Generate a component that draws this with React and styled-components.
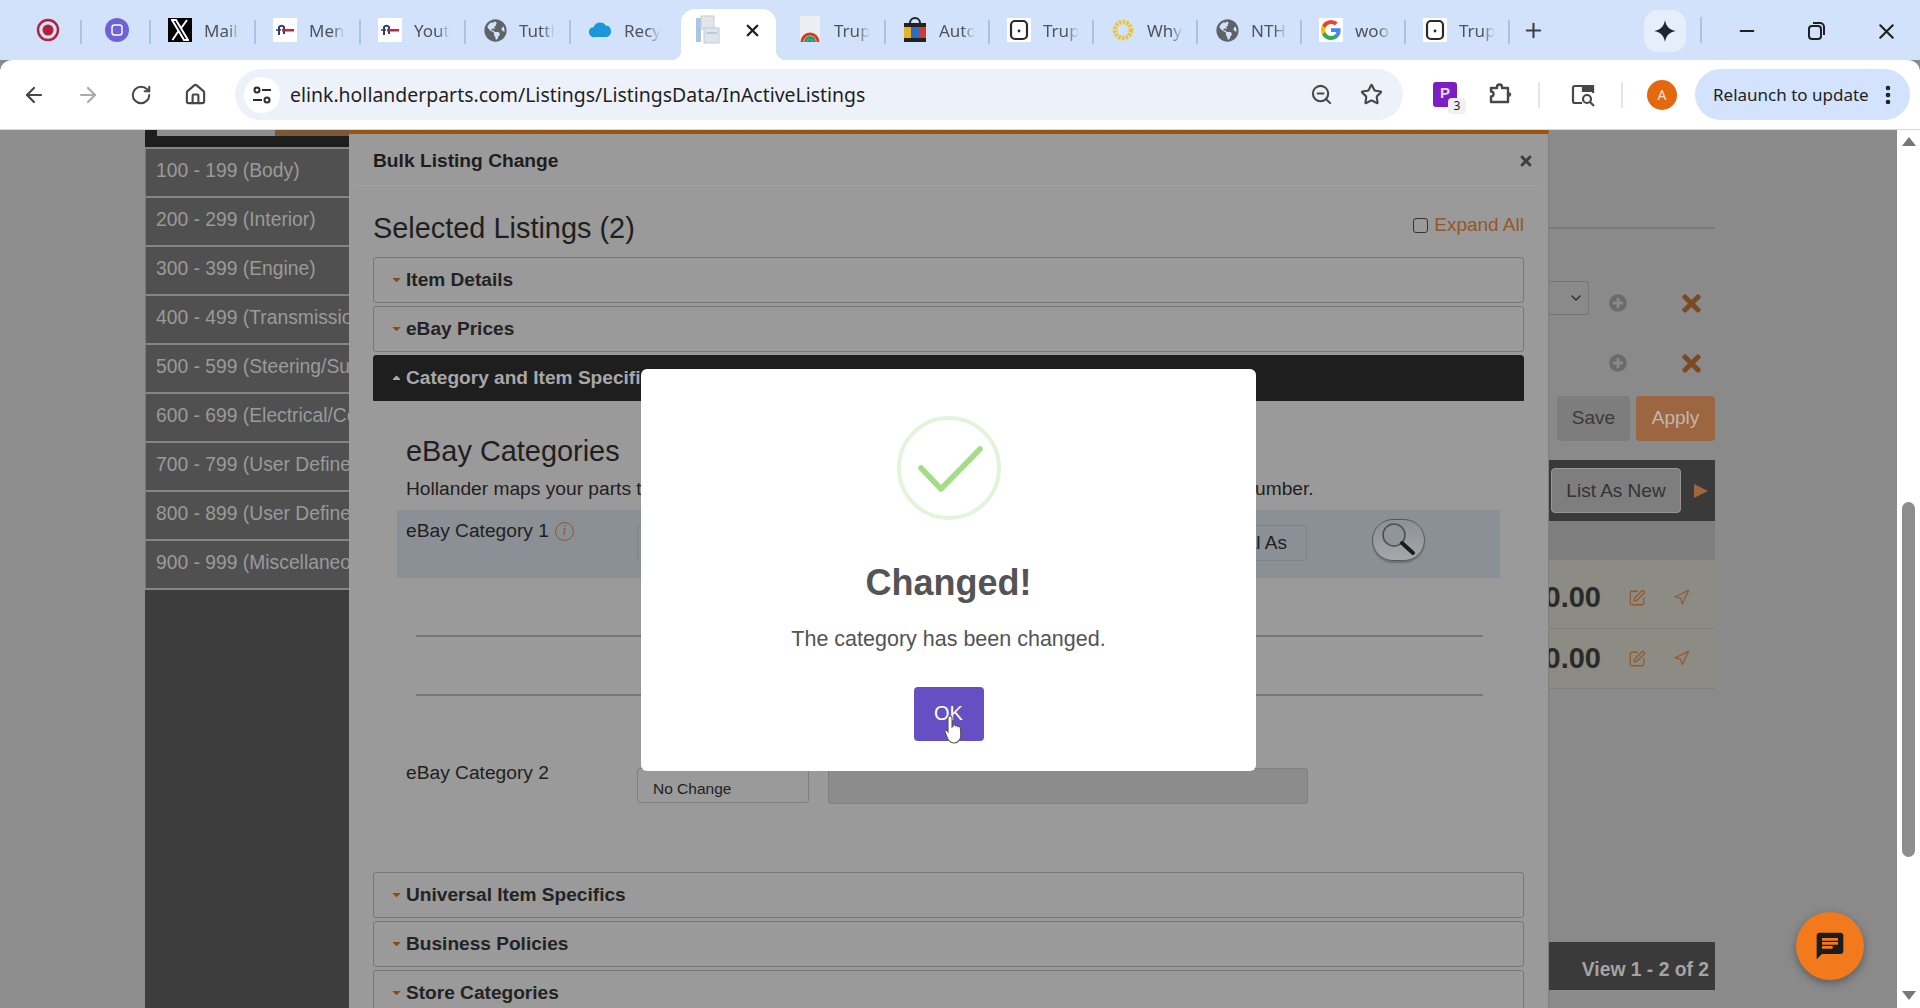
import React from 'react';
import styled, { createGlobalStyle } from 'styled-components';
import { ArrowLeft, ArrowRight, RotateCw, Home, ZoomOut, Star, Plus, Minus, X, EllipsisVertical, SquarePen, Navigation, ChevronDown } from 'lucide-react';
import { FaTimes, FaPlusCircle, FaCaretDown, FaCaretUp, FaGlobeAmericas } from 'react-icons/fa';

const GlobalStyle = createGlobalStyle`
  html, body { margin: 0; padding: 0; height: 100%; overflow: hidden; background: #8a8a8a; }
  * { box-sizing: border-box; }
  body { font-family: "Liberation Sans", Arial, sans-serif; }
`;

const Screen = styled.div`
  position: relative;
  width: 1920px;
  height: 1008px;
  overflow: hidden;
  display: flex;
  flex-direction: column;
`;

/* browser chrome */
const TabStrip = styled.div`
  height: 60px;
  background: #d3e2fb;
  display: flex;
  align-items: flex-end;
  padding-left: 13px;
  flex: none;
`;
const Tab = styled.div`
  width: ${p => p.$w}px;
  height: 51px;
  padding: 0 0 9px ${p => p.$pad}px;
  display: flex;
  align-items: center;
  gap: 12px;
  position: relative;
  &::after {
    content: '';
    display: ${p => (p.$nosep ? 'none' : 'block')};
    position: absolute;
    right: 0;
    top: 11px;
    height: 24px;
    width: 2px;
    background: #a9c3ec;
  }
`;
const ActiveTab = styled.div`
  width: 95px;
  height: 51px;
  background: #fff;
  border-radius: 14px 14px 0 0;
  padding: 0 14px 9px 14px;
  display: flex;
  align-items: center;
  justify-content: space-between;
  position: relative;
  &::before, &::after {
    content: '';
    position: absolute;
    bottom: 0;
    width: 10px;
    height: 10px;
    background: radial-gradient(circle at 0 0, transparent 10px, #fff 10.5px);
  }
  &::before { left: -10px; }
  &::after { right: -10px; background: radial-gradient(circle at 100% 0, transparent 10px, #fff 10.5px); }
`;
const TabTitle = styled.span`
  font-family: "Noto Sans", sans-serif;
  font-size: 17px;
  color: #50535a;
  width: 36px;
  overflow: hidden;
  white-space: nowrap;
  -webkit-mask-image: linear-gradient(90deg, #000 65%, transparent 100%);
  mask-image: linear-gradient(90deg, #000 65%, transparent 100%);
`;
const Favicon = styled.div`
  width: 24px;
  height: 24px;
  flex: none;
  display: flex;
  align-items: center;
  justify-content: center;
  background: ${p => p.$bg || 'transparent'};
  color: ${p => p.$color || '#5f6368'};
`;
const NewTab = styled.div`
  width: 50px;
  height: 51px;
  padding: 0 0 9px 12px;
  display: flex;
  align-items: center;
  color: #3c4043;
`;
const GeminiPill = styled.div`
  width: 42px;
  height: 42px;
  margin-left: 84px;
  margin-bottom: 8px;
  border-radius: 14px;
  background: #e6eefb;
  display: flex;
  align-items: center;
  justify-content: center;
  align-self: flex-end;
`;
const WinSep = styled.div`
  width: 2px;
  height: 26px;
  background: #a9c3ec;
  margin: 0 0 17px 14px;
`;
const WinButtons = styled.div`
  display: flex;
  align-items: center;
  height: 60px;
  margin-left: 34px;
  gap: 47px;
  color: #1f1f1f;
  padding-top: 2px;
  align-self: flex-start;
`;

const Toolbar = styled.div`
  height: 70px;
  background: #fff;
  border-radius: 12px 12px 0 0;
  border-bottom: 1px solid #d8d8d8;
  display: flex;
  align-items: center;
  padding-left: 22px;
  flex: none;
`;
const NavBtn = styled.div`
  width: 54px;
  flex: none;
  color: ${p => (p.$dim ? '#a8abb0' : '#474747')};
  display: flex;
  align-items: center;
`;
const Omnibox = styled.div`
  width: 1168px;
  height: 51px;
  margin-left: -3px;
  border-radius: 26px;
  background: #edf2fa;
  display: flex;
  align-items: center;
  padding: 0 20px 0 9px;
  flex: none;
`;
const SiteChip = styled.div`
  width: 36px;
  height: 36px;
  border-radius: 50%;
  background: #fff;
  display: flex;
  align-items: center;
  justify-content: center;
  flex: none;
`;
const Url = styled.div`
  margin-left: 10px;
  font-family: "Noto Sans", sans-serif;
  font-size: 19.45px;
  color: #1f1f1f;
  flex: 1;
  white-space: nowrap;
`;
const OmniIcons = styled.div`
  display: flex;
  gap: 27px;
  color: #474747;
  align-items: center;
`;
const ToolIcons = styled.div`
  display: flex;
  align-items: center;
  flex: none;
  margin-left: 30px;
  color: #474747;
`;
const ExtBadge = styled.div`
  position: relative;
  width: 24px;
  height: 25px;
  border-radius: 3px;
  background: #7b1fc4;
  color: #e8d5f7;
  font: bold 15px "Liberation Sans", sans-serif;
  text-align: center;
  line-height: 22px;
`;
const ExtCount = styled.span`
  position: absolute;
  right: -9px;
  bottom: -7px;
  width: 18px;
  height: 16px;
  background: #f1f1f1;
  border-radius: 4px;
  color: #1f1f1f;
  font: 12px/16px "Noto Sans", sans-serif;
`;
const PuzzleIcon = styled.svg`
  margin-left: 30px;
`;
const ToolSep = styled.div`
  width: 2px;
  height: 26px;
  background: #dfe6f1;
  margin: 0 ${p => p.$r}px 0 ${p => p.$l}px;
`;
const Avatar = styled.div`
  width: 30px;
  height: 30px;
  border-radius: 50%;
  background: #e3680f;
  color: #fde3cf;
  font: 14px/30px "Noto Sans", sans-serif;
  text-align: center;
`;
const RelaunchPill = styled.div`
  width: 215px;
  height: 51px;
  margin-left: 18px;
  border-radius: 26px;
  background: #d3e3fd;
  display: flex;
  align-items: center;
  justify-content: space-between;
  padding: 0 10px 0 18px;
  font-family: "Noto Sans", sans-serif;
  font-size: 17px;
  color: #1f1f1f;
  white-space: nowrap;
`;

/* dimmed page below */
const Page = styled.div`
  flex: 1;
  min-height: 0;
  display: flex;
  background: #8a8a8a;
  overflow: hidden;
`;
const Gutter = styled.div`
  width: 145px;
  flex: none;
  background: #8e8e8e;
`;
const Sidebar = styled.div`
  width: 204px;
  flex: none;
  background: #3d3d3d;
  display: flex;
  flex-direction: column;
`;
const SidebarTop = styled.div`
  height: 17px;
  background: #1e1e1e;
  display: flex;
  flex: none;
`;
const SidebarSearch = styled.div`
  margin-left: 12px;
  width: 118px;
  height: 6px;
  background: #8d8d8d;
`;
const SidebarBrown = styled.div`
  flex: 1;
  height: 6px;
  background: #7a5a36;
`;
const SideRow = styled.div`
  height: 49px;
  flex: none;
  background: #505050;
  border-top: 2px solid #858585;
  border-left: 1px solid #777;
  padding-left: 10px;
  color: #9a9a9a;
  font-size: 19.3px;
  line-height: 44px;
  white-space: nowrap;
  overflow: hidden;
  &:last-child { border-bottom: 2px solid #858585; height: 51px; }
`;

const Panel = styled.div`
  width: 1200px;
  flex: none;
  background: #9a9a9a;
  border-top: 4px solid #9b5413;
  border-right: 1px solid #808080;
  display: flex;
  flex-direction: column;
`;
const PanelHead = styled.div`
  height: 52px;
  margin: 0 9px 0 6px;
  padding: 2px 4px 0 18px;
  border-bottom: 1px solid #a4a4a4;
  display: flex;
  align-items: center;
  justify-content: space-between;
  flex: none;
`;
const PanelTitle = styled.div`
  font-weight: bold;
  font-size: 19.2px;
  color: #1d1d1d;
`;
const CloseX = styled.div`
  color: #3e3e3e;
  display: flex;
  margin-right: 1px;
`;
const PanelBody = styled.div`
  padding: 0 24px;
`;
const SelectedRow = styled.div`
  height: 71px;
  display: flex;
  align-items: center;
  justify-content: space-between;
`;
const SelectedTitle = styled.div`
  font-size: 28.9px;
  color: #1f1f1f;
  padding-top: 13px;
`;
const ExpandAll = styled.div`
  display: flex;
  align-items: center;
  gap: 6px;
  color: #96562a;
  font-size: 19px;
  padding-top: 7px;
`;
const CheckBox = styled.span`
  width: 15px;
  height: 15px;
  border: 1.5px solid #333;
  border-radius: 3px;
  background: #9a9a9a;
`;
const Accordion = styled.div`
  height: 46px;
  margin-bottom: 3px;
  border: 1px solid ${p => (p.$open ? '#1e1e1e' : '#777')};
  border-radius: ${p => (p.$open ? '3px 3px 0 0' : '3px')};
  background: ${p => (p.$open ? '#1e1e1e' : '#9a9a9a')};
  color: ${p => (p.$open ? '#a8a8a8' : '#232323')};
  font-weight: bold;
  font-size: 19.1px;
  display: flex;
  align-items: center;
  padding: 0 0 1px 16px;
  gap: 3px;
  svg { color: ${p => (p.$open ? '#a8a8a8' : '#8a4c14')}; }
`;
const CategoryBlock = styled.div`
  padding: 0 0 68px 33px;
`;
const H2 = styled.div`
  font-size: 28.9px;
  color: #1f1f1f;
  padding-top: 31px;
  height: 69px;
`;
const Intro = styled.div`
  font-size: 19.2px;
  color: #1f1f1f;
  white-space: nowrap;
  height: 37px;
  line-height: 24px;
  padding-top: 4px;
`;
const BlueRow = styled.div`
  margin-left: -9px;
  margin-right: 24px;
  height: 68px;
  background: #8a9095;
  display: flex;
  padding: 0 0 0 9px;
  color: #1f1f1f;
`;
const RowLabel = styled.div`
  width: 231px;
  flex: none;
  font-size: 19.2px;
  margin-top: ${p => p.$top}px;
  display: flex;
  gap: 6px;
  color: #1f1f1f;
`;
const InfoDot = styled.span`
  width: 19px;
  height: 19px;
  border: 1.5px solid #96562a;
  border-radius: 50%;
  color: #96562a;
  font: italic 14px/16px "Liberation Serif", serif;
  text-align: center;
  margin-top: 2px;
`;
const WideInput = styled.div`
  width: 670px;
  height: 36px;
  margin-top: 15px;
  border: 1px solid #7b858c;
  border-radius: 3px;
  padding-right: 19px;
  text-align: right;
  font-size: 19px;
  line-height: 34px;
  color: #202020;
  overflow: hidden;
  white-space: nowrap;
`;
const Lens = styled.div`
  width: 53px;
  height: 42px;
  margin: 9px 0 0 65px;
  border-radius: 21px;
  border: 1.5px solid #555a5e;
  background: linear-gradient(180deg, #8c9195, #a4a8ab);
  box-shadow: 0 2px 1px rgba(60, 60, 60, 0.35);
`;
const Divider = styled.div`
  height: 2px;
  background: #777;
  margin: ${p => p.$top}px 41px 0 10px;
`;
const SecondRow = styled.div`
  display: flex;
  margin-top: 72px;
  height: 36px;
`;
const SmallSelect = styled.div`
  width: 172px;
  height: 35px;
  border: 1px solid #7f7f7f;
  border-radius: 3px;
  font-size: 15.5px;
  padding: 11px 0 0 15px;
  color: #1f1f1f;
`;
const GreyInput = styled.div`
  width: 480px;
  height: 36px;
  margin-left: 19px;
  background: #8c8c8c;
  border: 1px solid #7f7f7f;
  border-radius: 3px;
`;

/* right hand page content */
const RightCol = styled.div`
  width: 166px;
  flex: none;
  display: flex;
  flex-direction: column;
`;
const RightRule = styled.div`
  height: 2px;
  background: #7a7a7a;
  margin-top: 97px;
`;
const FilterRow = styled.div`
  height: ${p => p.$h}px;
  margin-top: ${p => p.$top}px;
  display: flex;
  align-items: center;
`;
const SelectStub = styled.div`
  width: 40px;
  height: 34px;
  border: 1px solid #757575;
  border-left: 0;
  border-radius: 0 3px 3px 0;
  display: flex;
  align-items: center;
  justify-content: flex-end;
  padding-right: 4px;
  color: #333;
  flex: none;
`;
const PlusIcon = styled.div`
  color: #6b6b6b;
  display: flex;
  margin-left: ${p => p.$ml}px;
  margin-top: ${p => p.$mt}px;
  flex: none;
`;
const RemoveIcon = styled.div`
  color: #7a4a22;
  display: flex;
  margin-left: 51px;
  margin-top: ${p => p.$mt}px;
  flex: none;
`;
const ButtonRow = styled.div`
  display: flex;
  gap: 6px;
  padding-left: 8px;
  margin-top: 16px;
`;
const PageButton = styled.div`
  height: 45px;
  width: ${p => p.$w}px;
  border-radius: 4px;
  background: ${p => (p.$primary ? '#9c6640' : '#7d7d7d')};
  color: ${p => (p.$primary ? '#c4b7ac' : '#3a3a3a')};
  font-size: 19px;
  line-height: 43px;
  text-align: center;
`;
const DarkBar = styled.div`
  height: 61px;
  margin-top: 19px;
  background: #3a3a3a;
  display: flex;
  align-items: center;
  padding-left: 2px;
`;
const ListBtn = styled.div`
  width: 130px;
  height: 45px;
  background: #7e7e7e;
  border: 1px solid #959595;
  border-radius: 4px;
  color: #333;
  font-size: 19px;
  line-height: 43px;
  text-align: center;
`;
const PlayArrow = styled.div`
  width: 0;
  height: 0;
  margin-left: 13px;
  border-left: 14px solid #9c6640;
  border-top: 7px solid transparent;
  border-bottom: 7px solid transparent;
`;
const GreyBand = styled.div`
  height: 39px;
  background: #7e7e7e;
`;
const PriceRow = styled.div`
  height: ${p => p.$h}px;
  padding-top: ${p => p.$pt}px;
  background: #8c8b84;
  border-bottom: 1px solid #7f7f7f;
  display: flex;
  align-items: center;
  color: #2a2a2a;
  font-weight: bold;
  font-size: 29px;
  overflow: hidden;
`;
const PriceText = styled.div`
  width: 52px;
  flex: none;
  display: flex;
  justify-content: flex-end;
  white-space: nowrap;
  overflow: hidden;
`;
const RowIcon = styled.div`
  color: #96592c;
  display: flex;
  margin-left: ${p => p.$ml}px;
`;
const ViewBar = styled.div`
  height: 48px;
  margin-top: 253px;
  background: #3a3a3a;
  color: #a4a4a4;
  font-weight: bold;
  font-size: 19.3px;
  display: flex;
  align-items: flex-end;
  justify-content: flex-end;
  padding: 0 6px 9px 0;
  white-space: nowrap;
`;
const Spacer = styled.div`
  flex: 1;
`;
const Scrollbar = styled.div`
  width: 23px;
  flex: none;
  background: #fff;
  display: flex;
  flex-direction: column;
  align-items: center;
  padding-top: 7px;
`;
const ScrollUp = styled.div`
  width: 0;
  height: 0;
  border-left: 7px solid transparent;
  border-right: 7px solid transparent;
  border-bottom: 9px solid #777;
`;
const ScrollThumb = styled.div`
  width: 13px;
  height: 355px;
  margin-top: 356px;
  background: #8d8d8d;
  border-radius: 7px;
`;
const ScrollDown = styled.div`
  width: 0;
  height: 0;
  margin-top: 134px;
  border-left: 7px solid transparent;
  border-right: 7px solid transparent;
  border-top: 9px solid #777;
`;

const ChatFab = styled.div`
  position: absolute;
  left: 1796px;
  top: 912px;
  width: 68px;
  height: 68px;
  border-radius: 50%;
  background: #f37a1c;
  box-shadow: 0 3px 8px rgba(0, 0, 0, 0.35);
  display: flex;
  align-items: center;
  justify-content: center;
`;

/* success dialog */
const AlertOverlay = styled.div`
  position: absolute;
  left: 0;
  top: 131px;
  width: 1897px;
  height: 878px;
  display: flex;
  align-items: center;
  justify-content: center;
`;
const Alert = styled.div`
  width: 615px;
  height: 402px;
  background: #fff;
  border-radius: 6px;
  display: flex;
  flex-direction: column;
  align-items: center;
  padding-top: 47px;
`;
const AlertTitle = styled.div`
  margin-top: 42px;
  font-weight: bold;
  font-size: 36px;
  line-height: 42px;
  color: #545454;
`;
const AlertText = styled.div`
  margin-top: 22px;
  font-size: 21.5px;
  line-height: 26px;
  color: #545454;
`;
const OkButton = styled.div`
  position: relative;
  margin-top: 35px;
  width: 70px;
  height: 54px;
  border-radius: 4px;
  background: #6450c2;
  color: #fff;
  font-size: 20px;
  line-height: 52px;
  text-align: center;
`;
const Hand = styled.svg`
  position: absolute;
  left: 30px;
  top: 27px;
`;

const XLogo = () => (
  <svg width="18" height="22" viewBox="0 0 18 22"><path d="M1 1h4l12 20h-4zM16 1l-6.500 9M7.500 12L1.500 21" fill="none" stroke="#fff" strokeWidth="2" /></svg>
);
const HollanderMark = () => (
  <svg width="20" height="16" viewBox="0 0 20 16"><path d="M4 13V5a3 3 0 0 1 5 0v7" fill="none" stroke="#2c3e70" strokeWidth="2" /><path d="M1 8h5" stroke="#2c3e70" strokeWidth="1.500" /><rect x="7" y="7" width="12" height="2.500" fill="#b72b3b" /></svg>
);
const BoxMark = () => (
  <svg width="24" height="24" viewBox="0 0 24 24"><rect x="4" y="3" width="16" height="18" rx="4" fill="#fff" stroke="#2a2a2a" strokeWidth="2.200" /><circle cx="12" cy="13" r="1.400" fill="#2a2a2a" /></svg>
);
const SalesCloud = () => (
  <svg width="26" height="20" viewBox="0 0 26 20"><path d="M7 18c-4 0-6-3-6-6s2-5 5-5c1-3 4-5 7-5 3 0 5 1 6 3 4 0 6 3 6 6.500s-3 6-6 6H7z" fill="#1b96d8" /></svg>
);
const ColorBag = () => (
  <svg width="24" height="28" viewBox="0 0 24 28"><path d="M7 7a5 5 0 0 1 10 0" fill="none" stroke="#222" strokeWidth="2" /><rect x="1" y="7" width="22" height="4" fill="#222" /><rect x="1" y="11" width="7" height="11" fill="#e6b422" /><rect x="8" y="11" width="8" height="11" fill="#2b6cc4" /><rect x="16" y="11" width="7" height="11" fill="#d23b2e" /><rect x="1" y="22" width="22" height="4" fill="#222" /></svg>
);
const SunMark = () => (
  <svg width="24" height="24" viewBox="0 0 24 24"><circle cx="12" cy="12" r="8" fill="none" stroke="#e8c33c" strokeWidth="4.500" strokeDasharray="2.500 1.200" /></svg>
);
const GoogleG = () => (
  <svg width="24" height="24" viewBox="0 0 24 24">
    <path d="M21.600 12.200c0-.7-.1-1.400-.2-2H12v3.800h5.400a4.600 4.600 0 0 1-2 3v2.500h3.200c1.900-1.700 3-4.300 3-7.300z" fill="#4285f4" />
    <path d="M12 22c2.700 0 5-.9 6.600-2.500l-3.200-2.500c-.9.600-2 1-3.400 1-2.600 0-4.800-1.800-5.600-4.100H3.100v2.600A10 10 0 0 0 12 22z" fill="#34a853" />
    <path d="M6.400 13.900a6 6 0 0 1 0-3.800V7.500H3.100a10 10 0 0 0 0 9z" fill="#fbbc05" />
    <path d="M12 6c1.500 0 2.800.5 3.800 1.500l2.900-2.900A10 10 0 0 0 3.100 7.500l3.300 2.600C7.200 7.800 9.400 6 12 6z" fill="#ea4335" />
  </svg>
);
const RainbowMark = () => (
  <svg width="24" height="28" viewBox="0 0 24 28"><rect x="2" y="0" width="20" height="26" fill="#eceff2" /><path d="M4 26a8 8 0 0 1 16 0" fill="none" stroke="#d8352b" strokeWidth="3" /><path d="M7.500 26a4.500 4.500 0 0 1 9 0" fill="none" stroke="#2f9e44" strokeWidth="3" /><path d="M10.500 26a1.500 1.500 0 0 1 3 0" fill="none" stroke="#3d7de0" strokeWidth="3" /></svg>
);
const DocMark = () => (
  <svg width="26" height="30" viewBox="0 0 26 30"><rect x="1" y="3" width="5" height="24" fill="#a8c6e4" /><rect x="6" y="1" width="13" height="13" fill="#e2e6ea" stroke="#c5ccd3" /><rect x="9" y="13" width="15" height="15" fill="#dbe5ee" stroke="#c2ccd6" /><path d="M11 18h11" stroke="#b4c0cb" strokeWidth="1.500" /></svg>
);

const pinnedTabs = [
  <svg key="rec" width="24" height="24" viewBox="0 0 24 24"><circle cx="12" cy="12" r="10" fill="none" stroke="#b3203a" strokeWidth="2.400" /><circle cx="12" cy="12" r="5.500" fill="#b3203a" /></svg>,
  <svg key="box" width="24" height="24" viewBox="0 0 24 24"><circle cx="12" cy="12" r="12" fill="#6f63d3" /><rect x="7" y="7" width="10" height="10" rx="2.500" fill="none" stroke="#fff" strokeWidth="1.400" /></svg>,
];
const leftTabs = [
  { title: 'Mail', bg: '#000', icon: <XLogo /> },
  { title: 'Menu', bg: '#fff', icon: <HollanderMark /> },
  { title: 'Youtube', bg: '#fff', icon: <HollanderMark /> },
  { title: 'Tuttle', icon: <FaGlobeAmericas size={23} /> },
  { title: 'Recycle', icon: <SalesCloud />, nosep: true },
];
const rightTabs = [
  { title: 'Trupart', icon: <RainbowMark />, first: true },
  { title: 'Auto', icon: <ColorBag /> },
  { title: 'Trupart', bg: '#fff', icon: <BoxMark /> },
  { title: 'Why', icon: <SunMark /> },
  { title: 'NTH', icon: <FaGlobeAmericas size={23} /> },
  { title: 'woo', bg: '#fff', icon: <GoogleG /> },
  { title: 'Trupart', bg: '#fff', icon: <BoxMark /> },
];
const sideRows = [
  '100 - 199 (Body)', '200 - 299 (Interior)', '300 - 399 (Engine)', '400 - 499 (Transmission)',
  '500 - 599 (Steering/Suspension)', '600 - 699 (Electrical/Cooling)', '700 - 799 (User Defined)',
  '800 - 899 (User Defined)', '900 - 999 (Miscellaneous)',
];

const Caret = ({ up }) => (up ? <FaCaretUp size={13} /> : <FaCaretDown size={13} />);

const App = () => (
  <Screen>
    <GlobalStyle />
    <TabStrip>
      {pinnedTabs.map((icon, i) => (
        <Tab key={i} $w={69} $pad={23}><Favicon>{icon}</Favicon></Tab>
      ))}
      {leftTabs.map(t => (
        <Tab key={t.title} $w={t.nosep ? 110 : 105} $pad={17} $nosep={t.nosep}>
          <Favicon $bg={t.bg}>{t.icon}</Favicon>
          <TabTitle>{t.title}</TabTitle>
        </Tab>
      ))}
      <ActiveTab>
        <DocMark />
        <X size={19} strokeWidth={3} color="#1f1f1f" />
      </ActiveTab>
      {rightTabs.map((t, i) => (
        <Tab key={i} $w={t.first ? 110 : 104} $pad={t.first ? 22 : 17}>
          <Favicon $bg={t.bg}>{t.icon}</Favicon>
          <TabTitle>{t.title}</TabTitle>
        </Tab>
      ))}
      <NewTab><Plus size={23} strokeWidth={2.2} /></NewTab>
      <GeminiPill>
        <svg width="24" height="24" viewBox="0 0 24 24"><path d="M12 1c1 6.500 4.500 10 11 11-6.500 1-10 4.500-11 11-1-6.500-4.500-10-11-11 6.500-1 10-4.500 11-11z" fill="#1f2430" /></svg>
      </GeminiPill>
      <WinSep />
      <WinButtons>
        <Minus size={22} strokeWidth={2} />
        <svg width="22" height="22" viewBox="0 0 22 22" fill="none" stroke="#1f1f1f" strokeWidth="2"><rect x="4" y="6" width="12" height="13" rx="3" /><path d="M8 3h7a4 4 0 0 1 4 4v8" /></svg>
        <X size={25} strokeWidth={2} />
      </WinButtons>
    </TabStrip>

    <Toolbar>
      <NavBtn><ArrowLeft size={24} strokeWidth={2.2} /></NavBtn>
      <NavBtn $dim><ArrowRight size={24} strokeWidth={2.2} /></NavBtn>
      <NavBtn><RotateCw size={22} strokeWidth={2.2} /></NavBtn>
      <NavBtn><Home size={23} strokeWidth={2.2} /></NavBtn>
      <Omnibox>
        <SiteChip>
          <svg width="22" height="22" viewBox="0 0 22 22" fill="none" stroke="#2b2b2b" strokeWidth="2"><circle cx="6" cy="6" r="2.500" /><path d="M11 6h9M2 16h9" /><circle cx="16" cy="16" r="2.500" /></svg>
        </SiteChip>
        <Url>elink.hollanderparts.com/Listings/ListingsData/InActiveListings</Url>
        <OmniIcons>
          <ZoomOut size={23} strokeWidth={2.2} />
          <Star size={23} strokeWidth={2.2} />
        </OmniIcons>
      </Omnibox>
      <ToolIcons>
        <ExtBadge>P<ExtCount>3</ExtCount></ExtBadge>
        <PuzzleIcon width="26" height="26" viewBox="0 0 26 26" fill="none" stroke="#474747" strokeWidth="2.400" strokeLinejoin="round">
          <path d="M4 6h6V5a2.500 2.500 0 0 1 5 0v1h6v14H4v-5.500a2.500 2.500 0 0 0 0-5z" />
          <circle cx="22" cy="12.500" r="2.200" fill="#474747" stroke="none" />
        </PuzzleIcon>
        <ToolSep $l={25} $r={30} />
        <svg width="26" height="26" viewBox="0 0 26 26" fill="none" stroke="#474747" strokeWidth="2.200"><path d="M12 21H5a2 2 0 0 1-2-2V6a2 2 0 0 1 2-2h16a2 2 0 0 1 2 2v5" /><path d="M13 4h10v5H13z" fill="#474747" /><circle cx="17" cy="17" r="4" /><path d="M20 20l4 4" /></svg>
        <ToolSep $l={25} $r={24} />
        <Avatar>A</Avatar>
        <RelaunchPill>
          Relaunch to update
          <EllipsisVertical size={24} strokeWidth={2.6} />
        </RelaunchPill>
      </ToolIcons>
    </Toolbar>

    <Page>
      <Gutter />
      <Sidebar>
        <SidebarTop>
          <SidebarSearch />
          <SidebarBrown />
        </SidebarTop>
        {sideRows.map(r => <SideRow key={r}>{r}</SideRow>)}
      </Sidebar>

      <Panel>
        <PanelHead>
          <PanelTitle>Bulk Listing Change</PanelTitle>
          <CloseX><FaTimes size={16} /></CloseX>
        </PanelHead>
        <PanelBody>
          <SelectedRow>
            <SelectedTitle>Selected Listings (2)</SelectedTitle>
            <ExpandAll><CheckBox />Expand All</ExpandAll>
          </SelectedRow>
          <Accordion><Caret />Item Details</Accordion>
          <Accordion><Caret />eBay Prices</Accordion>
          <Accordion $open><Caret up />Category and Item Specifics</Accordion>
          <CategoryBlock>
            <H2>eBay Categories</H2>
            <Intro>Hollander maps your parts to eBay categories automatically using the Hollander part type and part number.</Intro>
            <BlueRow>
              <RowLabel $top={10}>eBay Category 1 <InfoDot>i</InfoDot></RowLabel>
              <WideInput>Universal As</WideInput>
              <Lens>
                <svg width="50" height="39" viewBox="0 0 50 39" fill="none"><circle cx="21" cy="15" r="11" stroke="#4a4f53" strokeWidth="1.500" fill="#90959a" /><path d="M29 23l11 10" stroke="#1b1b1b" strokeWidth="4" strokeLinecap="round" /></svg>
              </Lens>
            </BlueRow>
            <Divider $top={57} />
            <Divider $top={57} />
            <SecondRow>
              <RowLabel $top={-6}>eBay Category 2</RowLabel>
              <SmallSelect>No Change</SmallSelect>
              <GreyInput />
            </SecondRow>
          </CategoryBlock>
          <Accordion><Caret />Universal Item Specifics</Accordion>
          <Accordion><Caret />Business Policies</Accordion>
          <Accordion><Caret />Store Categories</Accordion>
        </PanelBody>
      </Panel>

      <RightCol>
        <RightRule />
        <FilterRow $h={34} $top={52}>
          <SelectStub><ChevronDown size={16} strokeWidth={2.4} /></SelectStub>
          <PlusIcon $ml={20} $mt={10}><FaPlusCircle size={18} /></PlusIcon>
          <RemoveIcon $mt={10}><FaTimes size={27} /></RemoveIcon>
        </FilterRow>
        <FilterRow $h={34} $top={31}>
          <PlusIcon $ml={60} $mt={0}><FaPlusCircle size={18} /></PlusIcon>
          <RemoveIcon $mt={0}><FaTimes size={27} /></RemoveIcon>
        </FilterRow>
        <ButtonRow>
          <PageButton $w={73}>Save</PageButton>
          <PageButton $w={79} $primary>Apply</PageButton>
        </ButtonRow>
        <DarkBar>
          <ListBtn>List As New</ListBtn>
          <PlayArrow />
        </DarkBar>
        <GreyBand />
        <PriceRow $h={69} $pt={7}>
          <PriceText>0.00</PriceText>
          <RowIcon $ml={27}><SquarePen size={18} strokeWidth={1.7} /></RowIcon>
          <RowIcon $ml={27}><Navigation size={17} strokeWidth={1.7} /></RowIcon>
        </PriceRow>
        <PriceRow $h={60} $pt={0}>
          <PriceText>0.00</PriceText>
          <RowIcon $ml={27}><SquarePen size={18} strokeWidth={1.7} /></RowIcon>
          <RowIcon $ml={27}><Navigation size={17} strokeWidth={1.7} /></RowIcon>
        </PriceRow>
        <ViewBar>View 1 - 2 of 2</ViewBar>
      </RightCol>
      <Spacer />
      <Scrollbar>
        <ScrollUp />
        <ScrollThumb />
        <ScrollDown />
      </Scrollbar>
    </Page>

    <ChatFab>
      <svg width="32" height="32" viewBox="0 0 24 24"><path d="M20 2H4c-1.100 0-1.990.9-1.990 2L2 22l4-4h14c1.100 0 2-.9 2-2V4c0-1.100-.9-2-2-2zM6 9h12v2H6V9zm8 5H6v-2h8v2zm4-6H6V6h12v2z" fill="#1d1d1d" /></svg>
    </ChatFab>

    <AlertOverlay>
      <Alert>
        <svg width="104" height="104" viewBox="0 0 104 104" fill="none">
          <circle cx="52" cy="52" r="50" stroke="#e4f4db" strokeWidth="4" />
          <path d="M24 52l20 21 39-40" stroke="#a5dc86" strokeWidth="5.500" strokeLinecap="round" strokeLinejoin="round" />
        </svg>
        <AlertTitle>Changed!</AlertTitle>
        <AlertText>The category has been changed.</AlertText>
        <OkButton>
          OK
          <Hand width="24" height="32" viewBox="0 0 24 32">
            <path d="M6 2c1.300 0 2 .8 2 2v9l1-.5V11c1-.7 2.300-.3 2.500.8.900-.6 2.200-.2 2.500.9 1-.5 2.300 0 2.400 1.300l.4 7.500c0 3-2 7.500-6.500 7.500-3.500 0-5-1.500-6.500-4L1 18c-.7-1.200.8-2.600 2-1.500L4 18V4c0-1.200.7-2 2-2z" fill="#fff" stroke="#555" strokeWidth="1.100" />
          </Hand>
        </OkButton>
      </Alert>
    </AlertOverlay>
  </Screen>
);

export default App;
